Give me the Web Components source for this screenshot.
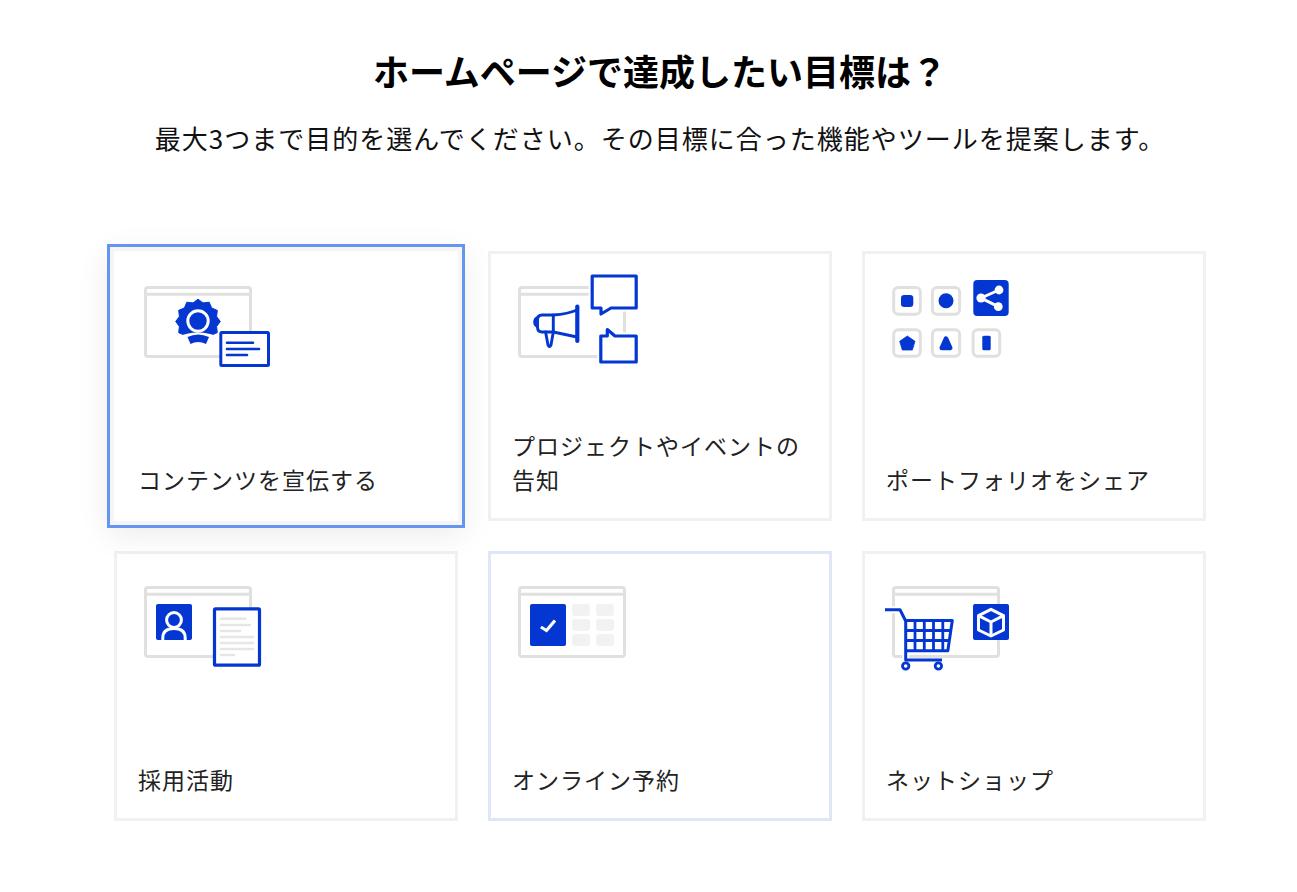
<!DOCTYPE html>
<html lang="ja"><head><meta charset="utf-8"><title>目標</title>
<style>
html,body{margin:0;background:#fff;}
body{font-family:"Noto Sans CJK JP","Noto Sans",sans-serif;color:#111;}
</style></head>
<body>
<goal-page>
  <goal-header slot="header" heading="ホームページで達成したい目標は？" sub="最大3つまで目的を選んでください。その目標に合った機能やツールを提案します。"></goal-header>
  <goal-card state="selected" icon="award">コンテンツを宣伝する</goal-card>
  <goal-card icon="announce">プロジェクトやイベントの告知</goal-card>
  <goal-card icon="share">ポートフォリオをシェア</goal-card>
  <goal-card icon="recruit">採用活動</goal-card>
  <goal-card state="focus" icon="booking">オンライン予約</goal-card>
  <goal-card icon="shop">ネットショップ</goal-card>
</goal-page>
<script>
const B='#0437d2';
const win=`<g fill="none" stroke="#e0e0df" stroke-width="3"><rect x="11.5" y="16.5" width="105" height="69" rx="2.5"/><path d="M11 23.3H117"/></g>`;
function star(cx,cy,R,r,n){let p=[];for(let i=0;i<n*2;i++){const a=Math.PI*i/n-Math.PI/2,q=i%2?r:R;p.push((cx+q*Math.cos(a)).toFixed(1)+','+(cy+q*Math.sin(a)).toFixed(1));}return p.join(' ');}
const ICONS={
award:win+`
<polygon points="${star(64,50.5,22.3,19.3,12)}" fill="${B}" stroke="${B}" stroke-linejoin="round"/>
<path d="M42,66.5 Q64,56.5 86,66.5 V78 H42Z" fill="#fff"/>
<path d="M53.5,66 Q64,61 75,66 L72,73 Q64,69 56.5,73Z" fill="${B}"/>
<circle cx="64" cy="50" r="10.2" fill="${B}" stroke="#fff" stroke-width="3"/>
<rect x="86.8" y="61.5" width="47.7" height="33" rx="1" fill="#fff" stroke="${B}" stroke-width="3"/>
<path d="M93,71.7H119M93,78H125M93,84H113" stroke="${B}" stroke-width="2.6" stroke-linecap="round"/>`,
announce:win+`
<path d="M84.2,5 H128.2 V37 H103 L93,43 V37 H84.2Z" fill="#fff" stroke="#fff" stroke-width="7" stroke-linejoin="round"/>
<path d="M92.8,65 H99.3 V58.5 L107,65 H128.2 V91 H92.8Z" fill="#fff" stroke="#fff" stroke-width="7" stroke-linejoin="round"/>
<path d="M84.2,5 H128.2 V37 H103 L93,43 V37 H84.2Z" fill="#fff" stroke="${B}" stroke-width="3.2" stroke-linejoin="round"/>
<path d="M92.8,65 H99.3 V58.5 L107,65 H128.2 V91 H92.8Z" fill="#fff" stroke="${B}" stroke-width="3.2" stroke-linejoin="round"/>
<g fill="none" stroke="${B}" stroke-width="2.9" stroke-linejoin="round" stroke-linecap="round">
<path d="M45.3,44 Q60,43 69,39M45.3,61 L69,66"/>
<path d="M45.3,44 H34 Q29.5,44 29.5,49 V56 Q29.5,61 34,61 H45.3Z"/>
<path d="M29.5,46.5 A5,5 0 0 0 29.5,55.5"/>
<path d="M37.6,61 L40,74 Q41.5,77 43,74 L45.3,61"/>
<path d="M69.3,35.5V70" stroke-width="4.2"/>
</g>`,
share:`
<g fill="#fff" stroke="#e0e0df" stroke-width="3">
<rect x="11.7" y="16.4" width="26.6" height="26.8" rx="4.5"/><rect x="50.4" y="16.4" width="27.2" height="26.8" rx="4.5"/>
<rect x="11.7" y="58.7" width="26.6" height="26.6" rx="4.5"/><rect x="50.4" y="58.7" width="27.2" height="26.6" rx="4.5"/><rect x="91.1" y="58.7" width="26.6" height="26.6" rx="4.5"/></g>
<rect x="91.3" y="9" width="35.4" height="36" rx="4" fill="${B}"/>
<rect x="19" y="24" width="12.3" height="12" rx="3.2" fill="${B}"/>
<circle cx="64" cy="29.7" r="7.5" fill="${B}"/>
<polygon points="25.3,65 33,70.3 30.3,79 20.3,79 17.7,70.3" fill="${B}" stroke="${B}" stroke-width=".8" stroke-linejoin="round"/>
<polygon points="64,67.5 68.3,77 59.7,77" fill="${B}" stroke="${B}" stroke-width="4.4" stroke-linejoin="round"/>
<rect x="100.3" y="64.7" width="8.4" height="14.6" rx="1.5" fill="${B}"/>
<path d="M117,19 L99,27 L116.3,35.7" fill="none" stroke="#fff" stroke-width="3"/>
<g fill="#fff"><circle cx="117" cy="19" r="4.4"/><circle cx="99" cy="27" r="4.6"/><circle cx="116.3" cy="35.7" r="4.4"/></g>`,
recruit:win+`
<rect x="22" y="33" width="36" height="36" rx="2" fill="${B}"/>
<circle cx="40" cy="49" r="7.4" fill="none" stroke="#fff" stroke-width="3"/>
<path d="M28.8,69 V67 C28.8,60 34,57.5 40,57.5 C46,57.5 51.2,60 51.2,67 V69" fill="none" stroke="#fff" stroke-width="3"/>
<rect x="80.5" y="37.8" width="45" height="56.4" rx="1" fill="#fff" stroke="${B}" stroke-width="3.2"/>
<path d="M87,47.7H111.5M87,54H116M87,60H106M87,66H119M87,72H119M87,78H119M87,84H100" stroke="#e6e6e6" stroke-width="2.6" stroke-linecap="round"/>`,
booking:win+`
<rect x="22" y="33" width="36" height="42" rx="2" fill="${B}"/>
<path d="M32.9,56 L38.5,59.5 L47,49.5" fill="none" stroke="#fff" stroke-width="3.2"/>
<g fill="#f2f2f2"><rect x="64" y="33" width="18" height="12" rx="3"/><rect x="88" y="33" width="18" height="12" rx="3"/>
<rect x="64" y="48" width="18" height="12" rx="3"/><rect x="88" y="48" width="18" height="12" rx="3"/>
<rect x="64" y="63" width="18" height="12" rx="3"/><rect x="88" y="63" width="18" height="12" rx="3"/></g>`,
shop:win+`
<rect x="91" y="33" width="36" height="36" rx="2" fill="${B}"/>
<g fill="none" stroke="#fff" stroke-width="3" stroke-linejoin="round"><path d="M109,38.3 L121.5,44.7 V59 L109,65 L96.5,59 V44.7Z"/><path d="M96.5,44.7 L109,51 L121.5,44.7M109,51V65"/></g>
<path d="M3,38.7 H18 L23.7,50 V89" fill="none" stroke="#fff" stroke-width="7"/>
<path d="M24,49.5 H70 L66,79.5 H24Z" fill="#fff"/>
<g fill="none" stroke="${B}" stroke-linejoin="round">
<path d="M3,38.7 H18 L23.7,50 V89 H60" stroke-width="3"/>
<path d="M23.7,49.5 H70.3 L65.8,79.7 H23.7" stroke-width="3"/>
<path d="M33,49.5V79.7M42.3,49.5V79.7M51.5,49.5V79.7M60.8,49.5V79.7M24,59.5H69M24,69.5H67.5" stroke-width="2.8"/>
<circle cx="23.7" cy="95" r="3.2" stroke-width="2.8" fill="#fff"/><circle cx="56.4" cy="95" r="3.2" stroke-width="2.8" fill="#fff"/>
</g>`
};
class GoalPage extends HTMLElement{constructor(){super();this.attachShadow({mode:'open'}).innerHTML=`<style>
:host{display:block;box-sizing:border-box;width:1297px;height:892px;padding:0 0 0 114px;}
.wrap{width:1092px;}
.grid{display:grid;grid-template-columns:repeat(3,344px);grid-auto-rows:270px;gap:30px;margin-top:0;}
</style><div class="wrap"><slot name="header"></slot><div class="grid"><slot></slot></div></div>`;}}
class GoalHeader extends HTMLElement{constructor(){super();this.attachShadow({mode:'open'}).innerHTML=`<style>
:host{display:block;height:251px;padding-top:46px;box-sizing:border-box;text-align:center;}
h1{margin:0;font-size:36px;line-height:48px;font-weight:700;color:#000;}
p{margin:26px 0 0;font-size:26px;letter-spacing:1px;line-height:36px;color:#111;white-space:nowrap;}
</style><h1>${this.getAttribute('heading')}</h1><p>${this.getAttribute('sub')}</p>`;}}
class GoalCard extends HTMLElement{constructor(){super();this.attachShadow({mode:'open'}).innerHTML=`<style>
:host{display:flex;flex-direction:column;justify-content:space-between;box-sizing:border-box;background:#fff;border:3px solid #f1f1f3;padding:17px 21px 22px 21px;}
:host([state=selected]){border-color:#fff;box-shadow:0 0 0 4px #f5f5f5,0 0 0 7px #6495f0,0 8px 30px 6px rgba(0,0,0,.08);position:relative;z-index:1;}
:host([state=focus]){border-color:#dfe6f7;}
svg{display:block;width:160px;height:110px;margin:0 0 0 -4px;overflow:visible;}
.t{font-size:23px;line-height:34px;color:#222;letter-spacing:1px;}
</style><svg viewBox="0 0 160 110">${ICONS[this.getAttribute('icon')]}</svg><div class="t"><slot></slot></div>`;}}
customElements.define('goal-page',GoalPage);
customElements.define('goal-header',GoalHeader);
customElements.define('goal-card',GoalCard);
</script>
</body></html>
